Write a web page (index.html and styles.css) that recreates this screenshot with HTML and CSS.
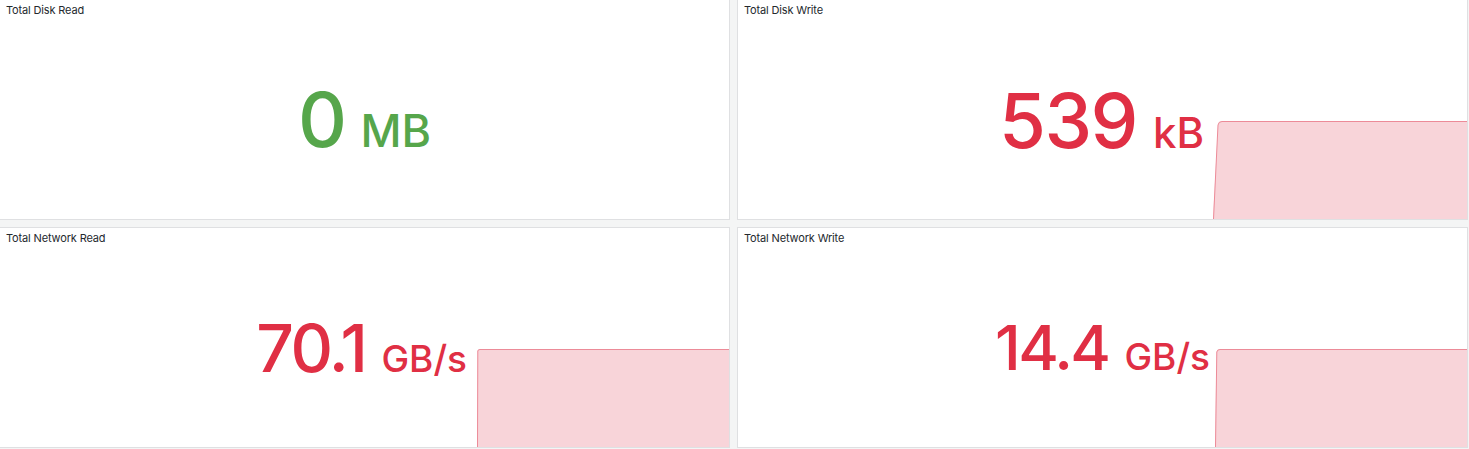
FILE: index.html
```html
<!DOCTYPE html>
<html lang="en">
<head>
<meta charset="utf-8">
<title>Disk &amp; Network</title>
<link rel="stylesheet" href="styles.css">
</head>
<body>
<div class="dashboard">
  <section class="panel">
    <header class="panel-title">Total Disk Read</header>
    <div class="panel-body">
      <div class="stat stat-center green">
        <span class="num num-lg">0</span><span class="unit unit-lg">MB</span>
      </div>
    </div>
  </section>
  <section class="panel">
    <header class="panel-title">Total Disk Write</header>
    <div class="panel-body">
      <div class="stat stat-right red gap-9">
        <span class="num num-lg num-tight">539</span><span class="unit unit-lg unit-kb">kB</span>
      </div>
      <div class="spark spark-wide">
        <svg viewBox="0 0 254 98" preserveAspectRatio="none" class="spark-svg">
          <path class="spark-fill" d="M0,98 L5,4 Q5.5,0 9,0 L254,0 L254,98 Z"/>
          <path class="spark-line" d="M0.5,98 L5,4 Q5.5,0.5 9,0.5 L254,0.5"/>
        </svg>
      </div>
    </div>
  </section>
  <section class="panel">
    <header class="panel-title">Total Network Read</header>
    <div class="panel-body">
      <div class="stat stat-right red gap-10">
        <span class="num num-md">70.1</span><span class="unit unit-md">GB/s</span>
      </div>
      <div class="spark">
        <svg viewBox="0 0 252 98" preserveAspectRatio="none" class="spark-svg">
          <path class="spark-fill" d="M0,98 L0.5,2 Q0.6,0 3,0 L252,0 L252,98 Z"/>
          <path class="spark-line" d="M0.5,98 L0.8,2 Q1,0.5 3,0.5 L252,0.5"/>
        </svg>
      </div>
    </div>
  </section>
  <section class="panel">
    <header class="panel-title">Total Network Write</header>
    <div class="panel-body">
      <div class="stat stat-right red gap-5">
        <span class="num num-sm">14.4</span><span class="unit unit-md">GB/s</span>
      </div>
      <div class="spark">
        <svg viewBox="0 0 252 98" preserveAspectRatio="none" class="spark-svg">
          <path class="spark-fill" d="M0,98 L1.5,3 Q2,0 5,0 L252,0 L252,98 Z"/>
          <path class="spark-line" d="M0.5,98 L1.8,3 Q2.2,0.5 5,0.5 L252,0.5"/>
        </svg>
      </div>
    </div>
  </section>
</div>
</body>
</html>
```
FILE: styles.css
```css
html, body {
  margin: 0;
  padding: 0;
}
body {
  background: #f4f5f5;
  font-family: Inter, "Noto Sans", "Liberation Sans", sans-serif;
  color: #24292e;
  overflow: hidden;
  width: 1469px;
  height: 449px;
}
.dashboard {
  display: grid;
  grid-template-columns: 731px 731px;
  grid-template-rows: 221px 221px;
  gap: 7px;
  margin: -1px 0 0 -1px;
}
.panel {
  background: #ffffff;
  border: 1px solid #dfe0e2;
  display: flex;
  flex-direction: column;
  overflow: hidden;
  min-height: 0;
}
.panel-title {
  font-size: 11px;
  line-height: 16px;
  font-weight: 400;
  letter-spacing: -0.15px;
  color: #24292e;
  padding: 2px 6px 0 6px;
  height: 18px;
  flex: none;
  white-space: nowrap;
}
.panel-body {
  flex: 1;
  display: flex;
  align-items: center;
  min-height: 0;
}
.stat {
  flex: 1;
  display: flex;
  align-items: baseline;
  white-space: nowrap;
}
.stat-center {
  justify-content: center;
}
.stat-right {
  justify-content: flex-end;
}
.gap-10 {
  padding-right: 10px;
}
.gap-9 {
  padding-right: 9px;
}
.gap-5 {
  padding-right: 5px;
}
.green {
  color: #56a64b;
}
.red {
  color: #e02f44;
}
.num {
  font-weight: 500;
  letter-spacing: -0.5px;
  line-height: 1;
}
.num-lg {
  font-size: 76px;
}
.num-tight {
  letter-spacing: -1.5px;
}
.num-md {
  font-size: 66px;
  letter-spacing: -2.5px;
}
.num-sm {
  font-size: 62px;
  letter-spacing: -2.6px;
}
.unit {
  font-weight: 500;
}
.unit-lg {
  font-size: 45px;
  margin-left: 14px;
}
.unit-kb {
  font-size: 42px;
  margin-left: 16px;
}
.unit-md {
  font-size: 37px;
  margin-left: 16px;
}
.spark {
  flex: none;
  width: 252px;
  height: 98px;
  align-self: flex-end;
}
.spark-wide {
  width: 254px;
}
.spark-svg {
  display: block;
  width: 100%;
  height: 100%;
}
.spark-fill {
  fill: #f8d4d9;
}
.spark-line {
  fill: none;
  stroke: #ec8b98;
  stroke-width: 1;
  vector-effect: non-scaling-stroke;
}
```
